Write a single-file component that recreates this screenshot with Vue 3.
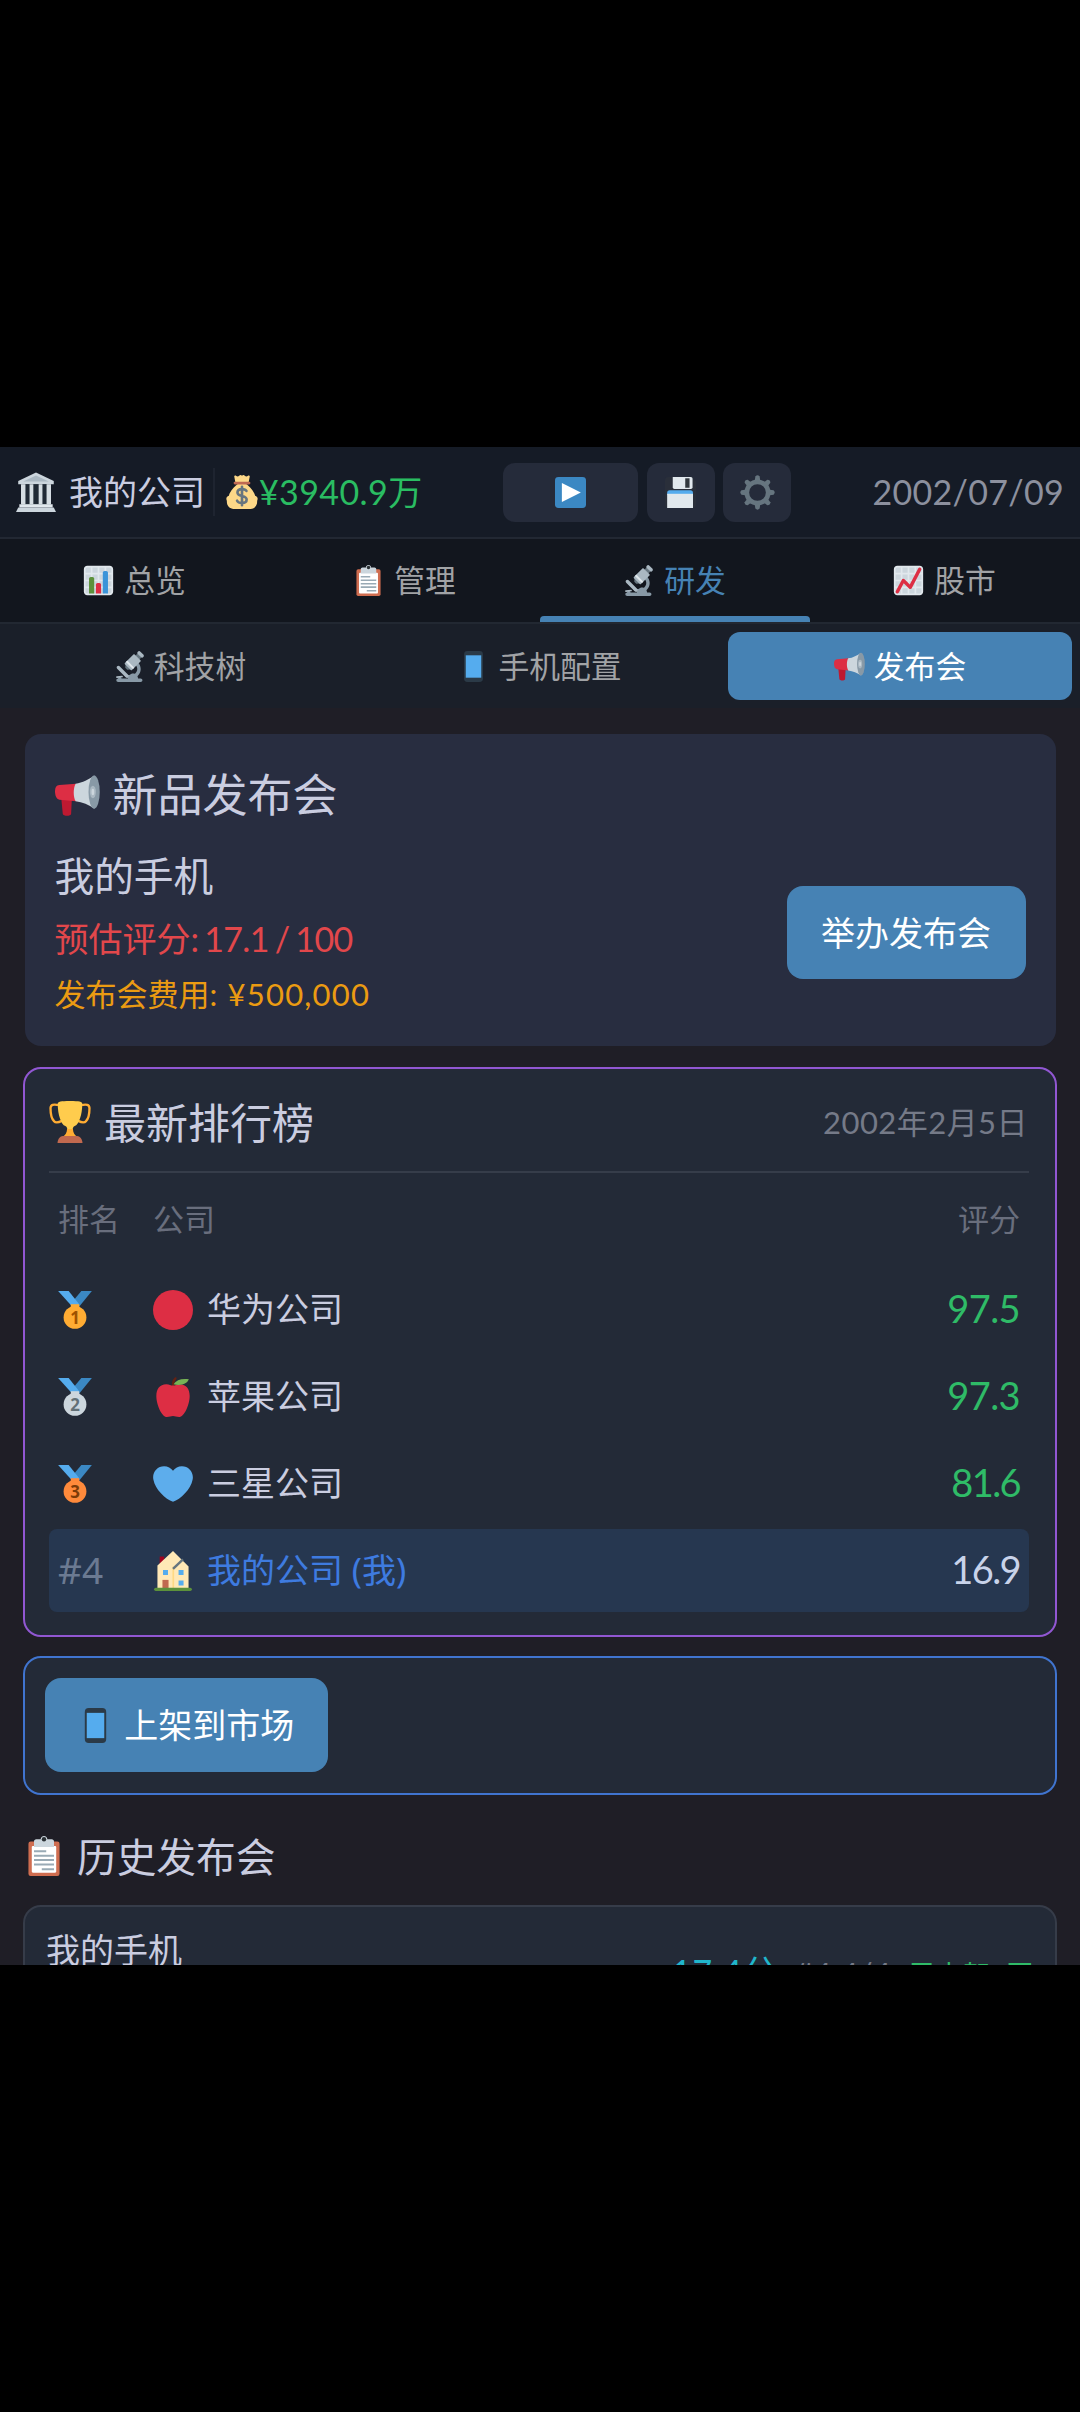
<script setup>
const tabs = [
  { icon: 'chart', label: '总览' },
  { icon: 'clip', label: '管理' },
  { icon: 'scope', label: '研发', active: true },
  { icon: 'trend', label: '股市' },
]
const subs = [
  { icon: 'scope', label: '科技树' },
  { icon: 'phone', label: '手机配置' },
  { icon: 'horn', label: '发布会', active: true },
]
const ranks = [
  { medal: { n: '1', fill: '#ffac33', ink: '#9e5200' }, icon: 'red', name: '华为公司', score: '97.5' },
  { medal: { n: '2', fill: '#ccd6dd', ink: '#627077' }, icon: 'apple', name: '苹果公司', score: '97.3' },
  { medal: { n: '3', fill: '#ff8a3b', ink: '#7c3b08' }, icon: 'heart', name: '三星公司', score: '81.6', slim: true },
  { place: '#4', icon: 'house', name: '我的公司 (我)', score: '16.9', slim: true, mine: true },
]
const gridLines = 'M31 1H5C2.791 1 1 2.791 1 5v26c0 2.209 1.791 4 4 4h26c2.209 0 4-1.791 4-4V5c0-2.209-1.791-4-4-4zm0 2c1.103 0 2 .897 2 2v4h-6V3h4zm-4 16h6v6h-6v-6zm0-2v-6h6v6h-6zM25 3v6h-6V3h6zm-6 8h6v6h-6v-6zm0 8h6v6h-6v-6zM17 3v6h-6V3h6zm-6 8h6v6h-6v-6zm0 8h6v6h-6v-6zM3 5c0-1.103.897-2 2-2h4v6H3V5zm0 6h6v6H3v-6zm0 8h6v6H3v-6zm2 14c-1.103 0-2-.897-2-2v-4h6v6H5zm6 0v-6h6v6h-6zm8 0v-6h6v6h-6zm12 0h-4v-6h6v4c0 1.103-.897 2-2 2z'
const teeth = [0, 45, 90, 135, 180, 225, 270, 315]
</script>

<template>
  <div class="screen">
    <svg class="defs" aria-hidden="true">
      <symbol id="bank" viewBox="0 0 36 36">
        <path fill="#ccd6dd" d="M18 .5 2 8v3h32V8z" />
        <path fill="#aab8c2" d="M18 3.2 6.5 8.6h23z" />
        <path fill="#66757f" d="M5 11h26v20H5z" />
        <path fill="#202a35" d="M8 11h20v18H8z" />
        <path fill="#d5dde2" d="M4.500 11h4v18h-4zM12.200 11h3.400v18h-3.400zM20.400 11h3.400v18h-3.400zM27.500 11h4v18h-4z" />
        <path fill="#e1e8ed" d="M3 29h30v3H3z" />
        <path fill="#ccd6dd" d="M2 32h32l2 4H0z" />
      </symbol>
      <symbol id="bag" viewBox="0 0 36 36">
        <path fill="#fdd888" d="M31.900 21.900C30.500 16.500 26 12.500 22.500 9.500h-9C10 12.500 5.500 16.500 4.100 21.900 1.500 22.500.8 25 2 27.500 1.500 32.500 5 36 9 36h18c4 0 7.500-3.500 7-8.500 1.200-2.500.5-5-2.100-5.600z" />
        <path fill="#fdd888" d="M11 8 9.800 1.500C9.600.4 11 .2 12 1c1 .8 2.200.6 3-.2.900-1 2.100-1 3 0 .9-1 2.100-1 3 0 .8.800 2 1 3 .2 1-.8 2.400-.6 2.200.5L25 8z" />
        <path fill="#bf6952" d="M10.500 7.200h15a1.400 1.400 0 0 1 0 2.800h-15a1.400 1.400 0 0 1 0-2.800z" />
        <path fill="none" stroke="#67757f" stroke-width="2.800" stroke-linecap="round" d="M22.700 16.900c-.7-1.300-2.400-2-4.700-2-2.800 0-4.800 1.300-4.800 3.600 0 5 9.700 2.400 9.700 7.400 0 2.400-2.100 3.700-4.900 3.700-2.600 0-4.500-.9-5.200-2.400M18 12.500v19.500" />
      </symbol>
      <symbol id="play" viewBox="0 0 36 36">
        <rect width="36" height="36" rx="4" fill="#3b88c3" />
        <path fill="#fff" d="M8 7l22 11L8 29z" />
      </symbol>
      <symbol id="disk" viewBox="0 0 36 36">
        <path fill="#31373d" d="M4 36s-4 0-4-4V4s0-4 4-4h26c1 0 2 1 2 1l3 3s1 1 1 2v26s0 4-4 4H4z" opacity=".4" />
        <path fill="#e1e8ed" d="M9 0h21a2 2 0 0 1 2 2v10a2 2 0 0 1-2 2H11a2 2 0 0 1-2-2z" />
        <path fill="#31373d" d="M23.500 1.500h5v11h-5z" />
        <path fill="#55acee" d="M2.500 18.500a3 3 0 0 1 3-3h24a3 3 0 0 1 3 3V21h-30z" />
        <path fill="#e1e8ed" d="M2.500 19.500h30V36h-30z" />
      </symbol>
      <symbol id="gear" viewBox="0 0 36 36">
        <circle cx="18" cy="18" r="11" fill="none" stroke="#66757f" stroke-width="4.800" />
        <path v-for="a in teeth" :key="a" fill="#66757f" d="M15 7 15.800 1.500Q18-.8 20.200 1.500L21 7z" :transform="`rotate(${a} 18 18)`" />
      </symbol>
      <symbol id="chart" viewBox="0 0 36 36">
        <rect x="2" y="2" width="32" height="32" rx="3" fill="#ccd6dd" />
        <path fill="#e1e8ed" :d="gridLines" />
        <path fill="#5c913b" d="M13 33H7V16c0-1.104.896-2 2-2h2c1.104 0 2 .896 2 2v17z" />
        <path fill="#3b94d9" d="M29 33h-6V9c0-1.104.896-2 2-2h2c1.104 0 2 .896 2 2v24z" />
        <path fill="#dd2e44" d="M21 33h-6V23c0-1.104.896-2 2-2h2c1.104 0 2 .896 2 2v10z" />
      </symbol>
      <symbol id="trend" viewBox="0 0 36 36">
        <rect x="2" y="2" width="32" height="32" rx="3" fill="#ccd6dd" />
        <path fill="#e1e8ed" :d="gridLines" />
        <path fill="#dd2e44" d="M4.998 33c-.32 0-.645-.076-.946-.239-.973-.523-1.336-1.736-.813-2.709l7-13c.299-.557.845-.939 1.470-1.031.626-.092 1.258.118 1.705.565l6.076 6.076 9.738-18.590c.512-.978 1.721-1.357 2.699-.843.979.512 1.356 1.721.844 2.700l-11 21c-.295.564-.841.953-1.470 1.050-.627.091-1.266-.113-1.716-.563l-6.100-6.099-5.724 10.631C6.400 32.619 5.710 33 4.998 33z" />
      </symbol>
      <symbol id="clip" viewBox="0 0 36 36">
        <rect x="4" y="5" width="28" height="31" rx="2" fill="#cf6d50" />
        <rect x="7" y="9" width="22" height="24" rx="1" fill="#fff" />
        <path fill="#ccd6dd" d="M25 3h-4c0-1.657-1.343-3-3-3s-3 1.343-3 3h-4c-1.104 0-2 .896-2 2v5h18V5c0-1.104-.896-2-2-2z" />
        <circle cx="18" cy="3" r="2" fill="#292f33" />
        <path stroke="#99aab5" stroke-width="1.800" d="M9 13.700h11M9 17.700h18M9 21.700h18M9 25.700h18M16 29.900h11" />
      </symbol>
      <symbol id="scope" viewBox="0 0 36 36">
        <path fill="#66757f" d="M19.780 21.345l-6.341-6.342-.389 4.380 2.350 2.351z" />
        <path fill="#8899a6" d="M31 32h-3c0-3.314-2.630-6-5.875-6-3.244 0-5.875 2.686-5.875 6H8.730c0-1.104-.895-2-2-2-1.104 0-2 .896-2 2-1.104 0-2 .896-2 2s.896 2 2 2H31c1.104 0 2-.896 2-2s-.896-2-2-2z" />
        <path fill="#8899a6" d="M20 10v4c3.866 0 7 3.134 7 7s-3.134 7-7 7h-8.485c2.018 2.443 5.069 4 8.485 4 6.075 0 11-4.925 11-11s-4.925-11-11-11z" />
        <path fill="#aab8c2" d="M16.414 30.414c-.781.781-2.047.781-2.828 0l-9.899-9.900c-.781-.781-.781-2.047 0-2.828.781-.781 2.047-.781 2.829 0l9.899 9.900c.78.781.78 2.047-.001 2.828zm-7.225-1.786c.547-.077 1.052.304 1.129.851.077.547-.305 1.053-.851 1.129l-5.942.834c-.547.077-1.052-.305-1.129-.851-.077-.547.305-1.053.852-1.130l5.941-.833z" />
        <path fill="#66757f" d="M27.341 2.980l4.461 4.461-3.806 3.807-4.461-4.461z" />
        <path fill="#aab8c2" d="M34.037 7.083c-.827.827-2.170.827-2.997 0l-3.339-3.340c-.827-.826-.827-2.169 0-2.996.827-.826 2.170-.826 2.995 0l3.342 3.340c.826.827.826 2.168-.001 2.996zm-14.560 15.026l-6.802-6.803c-.389-.389-.389-1.025 0-1.414l9.858-9.858c.389-.389 1.025-.389 1.414 0l6.801 6.803c.389.389.389 1.025 0 1.414l-9.858 9.858c-.388.389-1.024.389-1.413 0z" />
        <path fill="#e1e8ed" d="M13.766 12.800l1.638-1.637 8.216 8.216-1.638 1.637z" />
      </symbol>
      <symbol id="phone" viewBox="0 0 36 36">
        <rect x="7" width="22" height="36" rx="4" fill="#2b3a47" />
        <path fill="#55acee" d="M9 5h18v26H9z" />
      </symbol>
      <symbol id="horn" viewBox="0 0 36 36">
        <path fill="#be1931" d="M5 20h8.500l-.6 12.500c-.1 2.300-6.400 2.300-6.700 0z" />
        <path fill="#dd2e44" d="M17 8.500 3.500 9.500C1 9.800 0 11.500 0 14.500S1 20.800 3.500 21.300L17 22.500z" />
        <path fill="#ccd6dd" d="M16.500 8.500C22 8 27 5 31.500 2v26.500C27 25.500 22 23 16.500 22.500c-2-3.500-2-10.500 0-14z" />
        <ellipse cx="31.300" cy="15.200" rx="4.500" ry="13.300" fill="#8899a6" />
        <ellipse cx="30.300" cy="15.200" rx="2.400" ry="5" fill="#aab8c2" />
        <ellipse cx="30.300" cy="15.200" rx="1.100" ry="2.600" fill="#ccd6dd" />
      </symbol>
      <symbol id="cup" viewBox="0 0 36 36">
        <path fill="none" stroke="#ffac33" stroke-width="2" stroke-linejoin="round" d="M9 3.500C3.500 2.500 1.500 3 1.300 6c0 5 1.200 9.500 3 11.300 1.500 1.700 4.700.7 6.700-.3M27 3.500c5.500-1 7.500-.5 7.700 2.500 0 5-1.200 9.500-3 11.300-1.500 1.700-4.700.7-6.700-.3" />
        <path fill="#ffcc4d" d="M18 0c8 0 10.500.5 10.500 2.500 0 9-2.800 17.500-6.500 19-1.500.8-1.800 2-1.800 4.500h-4.400c0-2.500-.3-3.700-1.800-4.500-3.700-1.500-6.500-10-6.500-19C7.500.5 10 0 18 0z" />
        <path fill="#ffac33" d="M15.500 24h5c.2 3.500 1.500 5.500 4.500 7H11c3-1.500 4.300-3.500 4.500-7z" />
        <path fill="#c1694f" d="M12 30h12c2.500 0 4.500 2.500 4.700 6H7.300c.2-3.500 2.200-6 4.700-6z" />
      </symbol>
      <symbol id="red" viewBox="0 0 36 36"><circle cx="18" cy="18" r="18" fill="#dd2e44" /></symbol>
      <symbol id="heart" viewBox="0 0 36 36">
        <path fill="#5dadec" d="M35.885 11.833c0-5.450-4.418-9.868-9.867-9.868-3.308 0-6.227 1.633-8.018 4.129-1.791-2.496-4.710-4.129-8.017-4.129-5.450 0-9.868 4.417-9.868 9.868 0 .772.098 1.520.266 2.241C1.751 22.587 11.216 31.568 18 34.034c6.783-2.466 16.249-11.447 17.617-19.959.17-.721.268-1.469.268-2.242z" />
      </symbol>
      <symbol id="apple" viewBox="0 0 36 36">
        <path fill="#662113" d="M17 8c-.3-3 .6-5.500 2.600-7.600.8-.6 2 .2 1.600 1C20 3.500 19 5.500 19 8z" />
        <path fill="#dd2e44" d="M24 6.500c-3 0-3.800 1.200-6 1.200S15 6.500 12 6.500C6 6.500 3 11 3 17c0 8 5 19 9.500 19 2.500 0 3.500-.9 5.500-.9s3 .9 5.500.9C28 36 33 25 33 17c0-6-3-10.500-9-10.500z" />
        <path fill="#77b255" d="M18.500 6.500C21 2.500 25.500 1.200 32.300 2 31 5.500 25.500 8.500 18.500 6.500z" />
      </symbol>
      <symbol id="house" viewBox="0 0 36 36">
        <path fill="#a0041e" d="M6 5h4v8H6z" />
        <path fill="#ffe8b6" d="M18 0 4 13v21h28V14z" />
        <path fill="#ffd983" d="M17.500 14h1.500v20h-1.500z" />
        <path stroke="#66757f" stroke-width="2.200" d="m18 16 9-8.500" />
        <path fill="#55acee" d="M9 17h4.500v4.500H9zM23 17h4.500v4.500H23zM23 26.500h4.500V31H23z" />
        <path fill="#c1694f" d="M8.500 26H14v8H8.500z" />
        <path fill="#5c913b" d="M2.500 33h31a1.500 1.500 0 0 1 0 3h-31a1.500 1.500 0 0 1 0-3z" />
      </symbol>
    </svg>

    <div class="app">
      <header class="top">
        <div class="firm"><svg class="e e40"><use href="#bank" /></svg><span>我的公司</span></div>
        <div class="cash"><svg class="e e34"><use href="#bag" /></svg><span><span class="num">¥3940.9</span>万</span></div>
        <div class="tools">
          <button class="tool wide"><svg class="e e31"><use href="#play" /></svg></button>
          <button class="tool"><svg class="e e31"><use href="#disk" /></svg></button>
          <button class="tool"><svg class="e e35"><use href="#gear" /></svg></button>
        </div>
        <div class="date">2002/07/09</div>
      </header>

      <nav class="tabs">
        <div v-for="t in tabs" :key="t.label" class="tab" :class="{ on: t.active }">
          <svg class="e e31"><use :href="'#' + t.icon" /></svg><span class="lift">{{ t.label }}</span>
        </div>
      </nav>

      <nav class="subs">
        <div v-for="s in subs" :key="s.label" class="sub" :class="{ on: s.active }">
          <svg class="e e31"><use :href="'#' + s.icon" /></svg><span class="lift">{{ s.label }}</span>
        </div>
      </nav>

      <main class="body">
        <section class="launch">
          <h2><svg class="e e45"><use href="#horn" /></svg><span>新品发布会</span></h2>
          <div class="launch-row">
            <div>
              <div class="model">我的手机</div>
              <div class="est">预估评分<span class="num">: 17.1 / 100</span></div>
              <div class="fee">发布会费用<span class="num">: ¥500,000</span></div>
            </div>
            <button class="cta"><span class="lift">举办发布会</span></button>
          </div>
        </section>

        <section class="board">
          <div class="board-head">
            <h3><svg class="e e42"><use href="#cup" /></svg><span class="lift">最新排行榜</span></h3>
            <span class="when lift">2002年2月5日</span>
          </div>
          <div class="cols"><span class="c1">排名</span><span class="c2">公司</span><span>评分</span></div>
          <div class="rows">
            <div v-for="r in ranks" :key="r.name" class="row" :class="{ mine: r.mine }">
              <span class="c1">
                <svg v-if="r.medal" class="e e38 medal" viewBox="0 0 36 36">
                  <path fill="#3b88c3" d="M34 0H24l-7.500 9 5 6.500z" />
                  <path fill="#55acee" d="M2 0h10l10 12.500-5 4z" />
                  <path :fill="r.medal.fill" d="M14 12.500h8v4h-8z" />
                  <circle cx="18" cy="25" r="10.800" :fill="r.medal.fill" />
                  <text x="18" y="30.800" text-anchor="middle" class="digit" :fill="r.medal.ink">{{ r.medal.n }}</text>
                </svg>
                <span v-else class="place">{{ r.place }}</span>
              </span>
              <span class="c2 who"><svg class="e e40"><use :href="'#' + r.icon" /></svg><span class="lift">{{ r.name }}</span></span>
              <span class="score lift" :class="{ slim: r.slim }">{{ r.score }}</span>
            </div>
          </div>
        </section>

        <section class="market">
          <button class="cta shelf"><svg class="e e35"><use href="#phone" /></svg><span class="lift">上架到市场</span></button>
        </section>

        <h3 class="past"><svg class="e e40"><use href="#clip" /></svg><span class="lift">历史发布会</span></h3>

        <section class="item">
          <div class="item-name">我的手机</div>
          <div class="item-info">
            <span class="pts"><span class="num">17.4</span>分</span>
            <span class="pos">#4 4/4</span>
            <span class="sold">已上架1区</span>
          </div>
        </section>
      </main>
    </div>
  </div>
</template>

<style>
body { margin: 0; background: #000; }
</style>

<style scoped>
* { box-sizing: border-box; }
.screen {
  width: 1080px; height: 2412px; padding-top: 447px; background: #000; overflow: hidden;
  font-family: Lato, "Noto Sans CJK SC", sans-serif; font-weight: 400; color: #cacde0; white-space: nowrap;
}
.defs { position: absolute; width: 0; height: 0; }
.app { height: 1518px; overflow: hidden; background: #1f1e26; display: flex; flex-direction: column; }
h2, h3 { margin: 0; font-weight: 400; }
button { font: inherit; border: 0; padding: 0; color: inherit; }
.e { flex: none; display: block; overflow: visible; }
.e31 { width: 31px; height: 31px; }
.e34 { width: 34px; height: 34px; }
.e35 { width: 35px; height: 35px; }
.e38 { width: 38px; height: 38px; }
.e40 { width: 40px; height: 40px; }
.e42 { width: 42px; height: 42px; }
.e45 { width: 45px; height: 45px; }
.lift { padding-bottom: 4px; }

.top { flex: none; height: 92px; border-bottom: 2px solid #222833; background: #151b26; display: flex; align-items: center; padding: 0 16px; font-size: 34px; line-height: 50px; }
.firm { display: flex; align-items: center; gap: 13px; width: 199px; height: 48px; border-right: 2px solid #1e2430; }
.cash { display: flex; align-items: center; gap: 0; margin-left: 10px; color: #2abd62; width: 278px; }
.cash .num { letter-spacing: 0.4px; }
.tools { display: flex; gap: 8.500px; }
.tool { width: 68px; height: 59px; border-radius: 12px; background: #252b3a; display: flex; align-items: center; justify-content: center; }
.tool.wide { width: 135px; }
.date { margin-left: auto; color: #8c909e; letter-spacing: 0.3px; }

.tabs { flex: none; height: 85px; display: flex; border-bottom: 2px solid #222832; background: #12161e; }
.tab { width: 270px; position: relative; display: flex; align-items: center; justify-content: center; gap: 10px; padding-right: 1px; font-size: 30.800px; color: #a1a3a6; }
.tab.on { color: #4682b4; }
.tab.on::after { content: ""; position: absolute; left: 0; right: 0; bottom: 0; height: 6px; border-radius: 4px 4px 0 0; background: #4682b4; }

.subs { flex: none; height: 84px; padding: 8px; display: flex; gap: 16px; background: #1a1f29; }
.sub { flex: 1; height: 68px; border-radius: 12px; display: flex; align-items: center; justify-content: center; gap: 9px; font-size: 30.800px; color: #a1a3a6; }
.sub.on { background: #4682b4; color: #fff; }

.body { padding: 26px 23px 0; }
.launch { margin: 0 1.500px; height: 312px; border-radius: 16px; background: #282d40; padding: 31px 30px 0 30px; }
.launch h2 { display: flex; align-items: center; gap: 13px; height: 60px; font-size: 45px; line-height: 60px; }
.launch-row { display: flex; align-items: center; justify-content: space-between; margin-top: 21px; }
.model { font-size: 39.700px; line-height: 60px; }
.est { font-size: 34px; line-height: 66px; height: 65px; color: #e2474b; }
.fee { font-size: 31px; line-height: 46px; color: #eb9b12; }
.est .num { letter-spacing: -0.7px; word-spacing: -2px; }
.fee .num { letter-spacing: 1.2px; }
.cta { width: 239px; height: 93px; border-radius: 16px; background: #4682b4; color: #fff; font-size: 34px; display: flex; align-items: center; justify-content: center; }
.launch .cta { margin-top: 1px; }
.launch .cta .lift { padding-bottom: 2px; }

.board { margin-top: 21px; height: 570px; border: 2px solid #9157d2; border-radius: 18px; background: #232a37; padding: 22px 26px 0 24px; }
.board-head { display: flex; justify-content: space-between; align-items: center; height: 82px; padding-bottom: 18px; border-bottom: 2px solid #363d4a; }
.board-head h3 { display: flex; align-items: center; gap: 13px; font-size: 42px; }
.when { font-size: 31px; color: #757a88; letter-spacing: 0.45px; padding-right: 1px; }
.cols, .row { display: flex; align-items: center; padding: 0 9px; }
.cols { height: 95px; padding-bottom: 7px; font-size: 31px; color: #696e7d; }
.c1 { width: 95px; }
.c2 { flex: 1; }
.rows { display: flex; flex-direction: column; gap: 4px; }
.row { height: 83px; border-radius: 8px; font-size: 34px; }
.medal { margin-left: -2px; }
.digit { font: 700 16px "Open Sans", sans-serif; }
.who { display: flex; align-items: center; gap: 14px; }
.score { font-size: 38px; color: #2fbb67; letter-spacing: -0.6px; }
.score.slim { letter-spacing: -1.6px; padding-right: 0; }
.place { display: block; padding-bottom: 2px; font: 400 37px/50px "Noto Sans", sans-serif; color: #6b7a92; }
.mine { background: #263750; }
.mine .who { color: #3e7be0; font-family: "Noto Sans", "Noto Sans CJK SC", sans-serif; }
.mine .score { color: #c8d3ea; }

.market { margin-top: 19px; height: 139px; border: 2px solid #4074cf; border-radius: 18px; background: #232a37; padding: 20px; }
.shelf { width: 282.500px; height: 94px; gap: 11px; }

.past { margin-top: 30px; height: 62px; display: flex; align-items: center; gap: 13px; padding-left: 1px; font-size: 39.700px; }
.item { margin-top: 18px; height: 150px; border: 2px solid #363c49; border-radius: 18px; background: #232a37; padding: 18px 22px 18px 21px; display: flex; justify-content: space-between; }
.item-name { font-size: 34px; line-height: 50px; }
.item-info { display: flex; align-items: baseline; gap: 18px; margin-top: 22px; line-height: 50px; }
.pts { font-size: 34px; color: #20b6cc; }
.pts .num { letter-spacing: 1px; }
.pos { font-size: 31px; color: #757a88; letter-spacing: 0.4px; }
.sold { font-size: 27px; color: #2fbb67; }
</style>
